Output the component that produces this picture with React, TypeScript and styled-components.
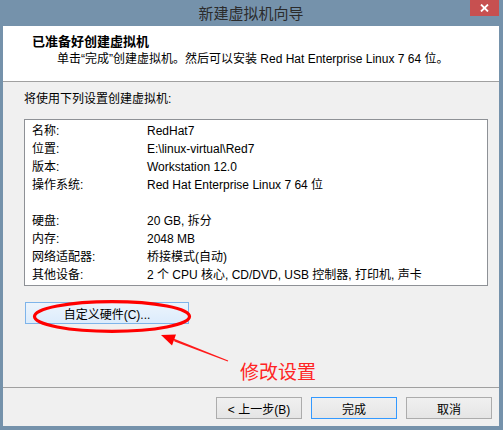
import React from "react";
import styled, { createGlobalStyle } from "styled-components";

const GlobalStyle = createGlobalStyle`
  html, body { margin: 0; padding: 0; background: #7592ab; }
  body {
    font-family: "Liberation Sans", "Noto Sans CJK SC", sans-serif;
    font-size: 12px;
    color: #000;
  }
  * { box-sizing: border-box; }
`;

const Window = styled.div`
  position: relative;
  width: 503px;
  height: 430px;
  background: #7592ab;
  display: flex;
  flex-direction: column;
  padding: 0 4px 4px 3px;
  overflow: hidden;
`;

const TitleBar = styled.div`
  height: 26px;
  flex: none;
  display: grid;
  grid-template-columns: 1fr auto 1fr;
`;

const Title = styled.div`
  grid-column: 2;
  font-family: "Noto Sans CJK SC", sans-serif;
  font-size: 15px;
  line-height: 25px;
  color: #2b2b2b;
  white-space: nowrap;
`;

const CloseButton = styled.div`
  grid-column: 3;
  justify-self: end;
  align-self: start;
  width: 29px;
  height: 16px;
  background: #c75050;
  display: flex;
  align-items: center;
  justify-content: center;
`;

const Content = styled.div`
  flex: 1;
  display: flex;
  flex-direction: column;
  background: #f0f0f0;
`;

const Header = styled.div`
  height: 56px;
  flex: none;
  background: #fff;
  border-bottom: 1px solid #a0a0a0;
  padding: 8px 0 0 29px;
`;

const HeaderTitle = styled.div`
  font-weight: bold;
  font-size: 13px;
  line-height: 16px;
`;

const HeaderSub = styled.div`
  padding-left: 25px;
  line-height: 18px;
`;

const Body = styled.div`
  flex: 1;
  padding: 8px 11px 0 21px;
`;

const Intro = styled.div`
  line-height: 18px;
`;

const SummaryBox = styled.div`
  margin-top: 11px;
  border: 1px solid #8e9196;
  background: #fff;
  padding: 2px 7px 1px;
  display: grid;
  grid-template-columns: 115px 1fr;
  grid-auto-rows: 18px;
  line-height: 18px;
`;

const Cell = styled.div`
  white-space: nowrap;
`;

const CustomizeButton = styled.button`
  display: block;
  margin: 16px 0 0 1px;
  width: 164px;
  height: 22px;
  padding: 0;
  border: 1px solid #7eb4ea;
  background: linear-gradient(#ecf4fc, #dcecfc);
  font-family: "Liberation Sans", "Noto Sans CJK SC", sans-serif;
  font-size: 12px;
  color: #000;
`;

const Footer = styled.div`
  height: 39px;
  flex: none;
  border-top: 1px solid #a0a0a0;
  display: flex;
  justify-content: flex-end;
  align-items: flex-start;
  gap: 9px;
  padding: 9px 7px 0 0;
`;

const DialogButton = styled.button<{ $primary?: boolean }>`
  width: 86px;
  height: 22px;
  padding: 0;
  border: 1px solid ${(p) => (p.$primary ? "#3399ff" : "#acacac")};
  background: linear-gradient(#f0f0f0, #e5e5e5);
  font-family: "Liberation Sans", "Noto Sans CJK SC", sans-serif;
  font-size: 12px;
  color: #000;
`;

const AnnotationLayer = styled.svg`
  position: absolute;
  left: 0;
  top: 0;
  pointer-events: none;
`;

const AnnotationText = styled.div`
  position: absolute;
  left: 240px;
  top: 361px;
  font-family: "Noto Sans CJK SC", sans-serif;
  font-size: 19px;
  line-height: 20px;
  color: #ff2424;
  white-space: nowrap;
`;

const rows: [string, string][] = [
  ["名称:", "RedHat7"],
  ["位置:", "E:\\linux-virtual\\Red7"],
  ["版本:", "Workstation 12.0"],
  ["操作系统:", "Red Hat Enterprise Linux 7 64 位"],
  ["", ""],
  ["硬盘:", "20 GB, 拆分"],
  ["内存:", "2048 MB"],
  ["网络适配器:", "桥接模式(自动)"],
  ["其他设备:", "2 个 CPU 核心, CD/DVD, USB 控制器, 打印机, 声卡"],
];

export default function App() {
  return (
    <>
      <GlobalStyle />
      <Window>
        <TitleBar>
          <Title>新建虚拟机向导</Title>
          <CloseButton>
            <svg width="9" height="8" viewBox="0 0 9 8">
              <path d="M1 0.5 L8 7.5 M8 0.5 L1 7.5" stroke="#fff" strokeWidth="1.8" />
            </svg>
          </CloseButton>
        </TitleBar>
        <Content>
          <Header>
            <HeaderTitle>已准备好创建虚拟机</HeaderTitle>
            <HeaderSub>单击“完成”创建虚拟机。然后可以安装 Red Hat Enterprise Linux 7 64 位。</HeaderSub>
          </Header>
          <Body>
            <Intro>将使用下列设置创建虚拟机:</Intro>
            <SummaryBox>
              {rows.map(([k, v], i) => (
                <React.Fragment key={i}>
                  <Cell>{k}</Cell>
                  <Cell>{v}</Cell>
                </React.Fragment>
              ))}
            </SummaryBox>
            <CustomizeButton>自定义硬件(C)...</CustomizeButton>
          </Body>
          <Footer>
            <DialogButton>&lt; 上一步(B)</DialogButton>
            <DialogButton $primary>完成</DialogButton>
            <DialogButton>取消</DialogButton>
          </Footer>
        </Content>
        <AnnotationLayer width="503" height="430" viewBox="0 0 503 430">
          <ellipse cx="112" cy="316.5" rx="77.5" ry="14.8" fill="none" stroke="#ff0000" strokeWidth="3.2" />
          <polygon points="228.2,360.5 227.8,361.5 174.5,341.4 173.5,338.6" fill="#ff1a1a" />
          <polygon points="161,335 176,334.5 172,345.5" fill="#ff0000" />
        </AnnotationLayer>
        <AnnotationText>修改设置</AnnotationText>
      </Window>
    </>
  );
}
